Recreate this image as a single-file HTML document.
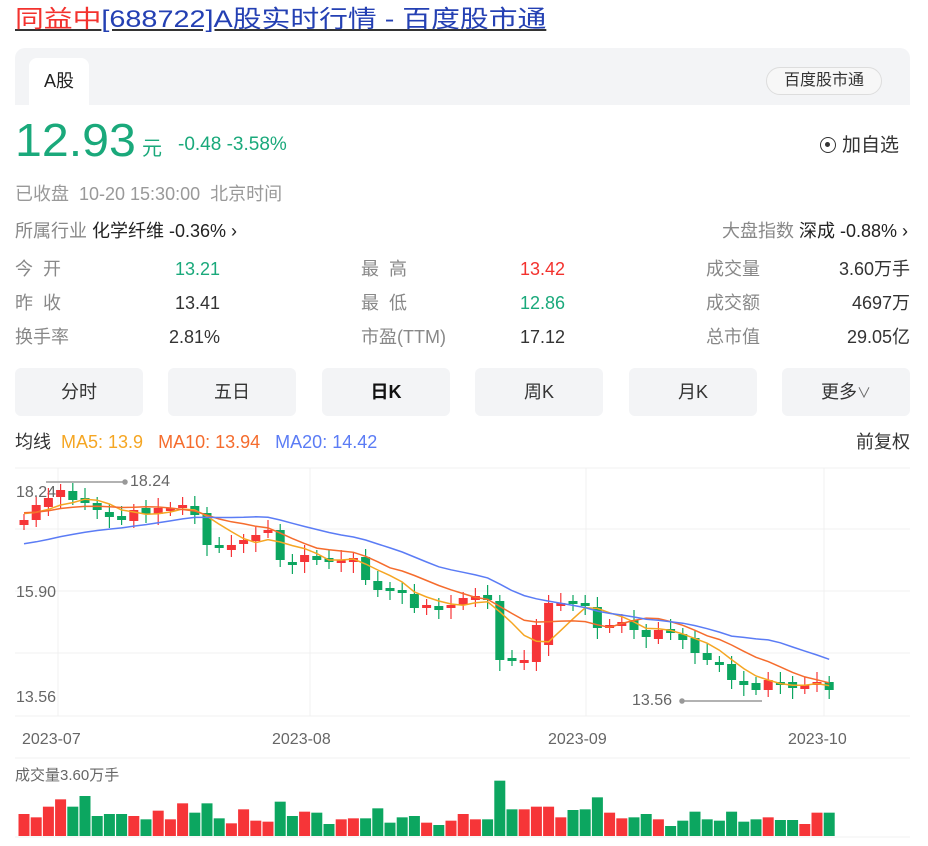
<!DOCTYPE html>
<html><head><meta charset="utf-8">
<style>
*{margin:0;padding:0;box-sizing:border-box}
body{width:928px;height:846px;background:#fff;font-family:"Liberation Sans","Noto Sans CJK SC",sans-serif;position:relative;overflow:hidden;color:#333}
.a{position:absolute;white-space:nowrap}
.g{color:#888}
.btn{position:absolute;top:368px;width:128px;height:48px;background:#f3f4f6;border-radius:6px;text-align:center;line-height:48px;font-size:18px;color:#333}
</style></head><body>
<div class="a" style="left:15px;top:4px;font-size:24px;line-height:32px;text-decoration:underline;transform:scaleX(1.2);transform-origin:0 0"><span style="color:#f3322e">同益中</span><span style="color:#2440b3">[688722]A股实时行情 - 百度股市通</span></div>
<div class="a" style="left:15px;top:48px;width:895px;height:57px;background:#f3f4f6;border-radius:10px 10px 0 0"></div>
<div class="a" style="left:29px;top:58px;width:60px;height:47px;background:#fff;border-radius:8px 8px 0 0;font-size:18px;line-height:46px;text-align:center;color:#222">A股</div>
<div class="a" style="left:766px;top:67px;width:116px;height:28px;border:1px solid #ddd;border-radius:14px;font-size:16px;line-height:26px;text-align:center;color:#333;background:#f7f7f7">百度股市通</div>
<div class="a" style="left:15px;top:112px;font-size:46px;line-height:56px;color:#1aa97b;transform:scaleX(1.05);transform-origin:0 0">12.93</div>
<div class="a" style="left:142px;top:132px;font-size:20px;color:#1aa97b">元</div>
<div class="a" style="left:178px;top:134px;font-size:19px;color:#1aa97b">-0.48 -3.58%</div>
<div class="a" style="left:820px;top:130px;font-size:19px;color:#333"><span style="display:inline-block;width:16px;height:16px;border:1.5px solid #333;border-radius:50%;vertical-align:-2px;position:relative;margin-right:6px"><span style="position:absolute;left:4px;top:4px;width:5px;height:5px;background:#333;border-radius:50%"></span></span>加自选</div>
<div class="a g" style="left:15px;top:180px;font-size:18px;color:#999">已收盘&nbsp; 10-20 15:30:00&nbsp; 北京时间</div>
<div class="a" style="left:15px;top:217px;font-size:18px"><span class="g">所属行业</span> <span style="color:#222">化学纤维 -0.36% ›</span></div>
<div class="a" style="right:20px;top:217px;font-size:18px"><span class="g">大盘指数</span> <span style="color:#222">深成 -0.88% ›</span></div>

<div class="a g" style="left:15px;top:252px;font-size:18px;line-height:34px">今&nbsp;&nbsp;开<br>昨&nbsp;&nbsp;收<br>换手率</div>
<div class="a" style="left:120px;width:100px;text-align:right;top:252px;font-size:18px;line-height:34px"><span style="color:#1aa97b">13.21</span><br>13.41<br>2.81%</div>
<div class="a g" style="left:361px;top:252px;font-size:18px;line-height:34px">最&nbsp;&nbsp;高<br>最&nbsp;&nbsp;低<br>市盈(TTM)</div>
<div class="a" style="left:465px;width:100px;text-align:right;top:252px;font-size:18px;line-height:34px"><span style="color:#f3322e">13.42</span><br><span style="color:#1aa97b">12.86</span><br>17.12</div>
<div class="a g" style="left:706px;top:252px;font-size:18px;line-height:34px">成交量<br>成交额<br>总市值</div>
<div class="a" style="left:760px;width:150px;text-align:right;top:252px;font-size:18px;line-height:34px">3.60万手<br>4697万<br>29.05亿</div>

<div class="btn" style="left:15px">分时</div>
<div class="btn" style="left:168px">五日</div>
<div class="btn" style="left:322px;font-weight:bold;color:#111">日K</div>
<div class="btn" style="left:475px">周K</div>
<div class="btn" style="left:629px">月K</div>
<div class="btn" style="left:782px">更多<span style="font-size:14px;color:#666">∨</span></div>

<div class="a" style="left:15px;top:428px;font-size:18px"><span style="color:#333">均线</span>&nbsp; <span style="color:#f5a623">MA5: 13.9</span>&nbsp;&nbsp; <span style="color:#f56c2d">MA10: 13.94</span>&nbsp;&nbsp; <span style="color:#5b7cf5">MA20: 14.42</span></div>
<div class="a" style="right:18px;top:428px;font-size:18px;color:#333">前复权</div>

<svg id="ch" class="a" style="left:0;top:0" width="928" height="846" xmlns="http://www.w3.org/2000/svg">
<g stroke="#f0f0f0" stroke-width="1">
<line x1="15" y1="468" x2="910" y2="468"/><line x1="15" y1="529" x2="910" y2="529"/><line x1="15" y1="591" x2="910" y2="591"/><line x1="15" y1="653" x2="910" y2="653"/><line x1="15" y1="716" x2="910" y2="716"/>
<line x1="58" y1="468" x2="58" y2="716"/><line x1="310" y1="468" x2="310" y2="716"/><line x1="586" y1="468" x2="586" y2="716"/><line x1="824" y1="468" x2="824" y2="716"/>
<line x1="15" y1="758" x2="910" y2="758"/><line x1="15" y1="837" x2="910" y2="837"/>
</g>
<g font-family="Liberation Sans,sans-serif" font-size="16" fill="#666">
<text x="16" y="497">18.24</text><text x="16" y="597">15.90</text><text x="16" y="702">13.56</text>
<text x="130" y="486">18.24</text><text x="632" y="705">13.56</text>
<text x="22" y="744">2023-07</text><text x="272" y="744">2023-08</text><text x="548" y="744">2023-09</text><text x="788" y="744">2023-10</text>
<text x="15" y="780" font-size="15" font-family="Liberation Sans,Noto Sans CJK SC,sans-serif">成交量3.60万手</text>
</g>
<g stroke="#999" stroke-width="1.5" fill="#999"><line x1="46" y1="482" x2="125" y2="482"/><circle cx="125" cy="482" r="2"/><line x1="682" y1="701" x2="762" y2="701"/><circle cx="682" cy="701" r="2"/></g>
<g id="cg"></g>
</svg>
<script>
var C=[520,505,498,490,500,503,510,517,520,510,514,508,508,505,515,545,548,545,540,535,530,560,563,555,560,562,560,558,580,590,590,592,608,605,610,605,598,596,600,660,661,660,625,603,603,603,605,628,625,622,630,637,630,633,640,653,660,665,680,685,690,680,683,688,685,682,690];
var V=[1062,1072,1040,1018,1040,1008,1068,1062,1062,1068,1078,1052,1078,1030,1058,1030,1075,1090,1048,1082,1085,1025,1068,1055,1058,1092,1078,1075,1075,1045,1088,1072,1068,1088,1095,1082,1062,1078,1078,962,1048,1048,1040,1040,1072,1050,1048,1012,1058,1075,1072,1062,1078,1098,1082,1055,1078,1082,1055,1085,1078,1072,1080,1080,1092,1058,1058];
var s='',R='#f63538',G='#0ca660';
function X(i){return 24+i*12.2}
for(var i=0;i<C.length;i++){
 var o=i==0?525:C[i-1]+((i*7)%5-2),c=C[i];
 if(i==43)o=645;
 var up=c<o,col=up?R:G,t=Math.min(o,c),b=Math.max(o,c);if(b-t<3)b=t+3;
 var x=X(i);
 s+='<line x1="'+x+'" x2="'+x+'" y1="'+(t-6-(i%3)*2)+'" y2="'+(b+5+(i%4)*2)+'" stroke="'+col+'" stroke-width="1.2"/>';
 s+='<rect x="'+(x-4.5)+'" y="'+t+'" width="9" height="'+(b-t)+'" fill="'+col+'"/>';
 var vt=460+V[i%V.length]/3;
 s+='<rect x="'+(x-5.5)+'" y="'+vt+'" width="11" height="'+(836-vt)+'" fill="'+col+'"/>';
}
function ma(n,pad){var a=[],p=[];for(var k=0;k<n;k++)p.push(pad);var all=p.concat(C);
 for(var i=0;i<C.length;i++){var sm=0;for(var k=0;k<n;k++)sm+=all[i+n-k];a.push(X(i)+','+(sm/n).toFixed(1));}return a.join(' ');}
s+='<polyline fill="none" stroke="#f5a623" stroke-width="1.5" points="'+ma(5,512)+'"/>';
s+='<polyline fill="none" stroke="#f56c2d" stroke-width="1.5" points="'+ma(10,512)+'"/>';
s+='<polyline fill="none" stroke="#5b7cf5" stroke-width="1.5" points="'+ma(20,545)+'"/>';
document.getElementById('cg').innerHTML=s;
</script>
</body></html>
